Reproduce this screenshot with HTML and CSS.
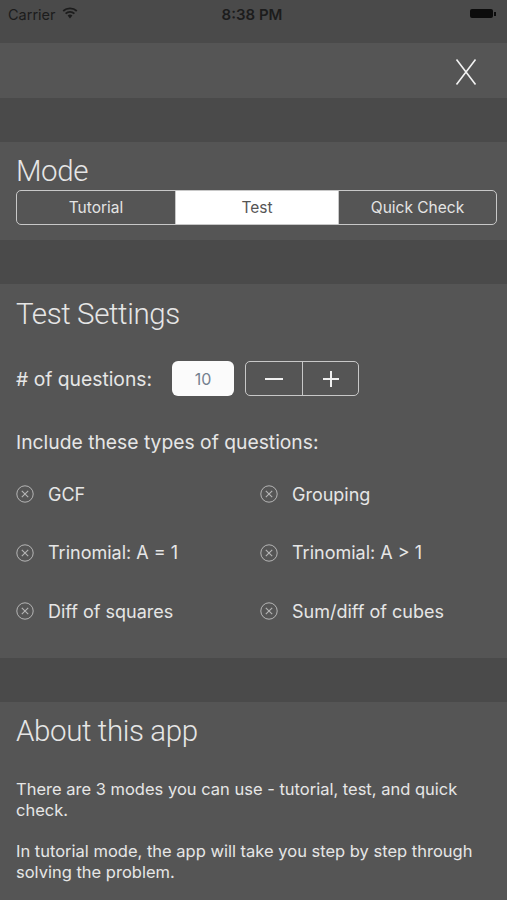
FILE: index.html
```html
<!DOCTYPE html>
<html>
<head>
<meta charset="utf-8">
<link rel="stylesheet" href="styles.css">
</head>
<body>
<div class="status">
  <div class="carrier">Carrier
    <svg class="wifi" width="16" height="12" viewBox="0 0 16 12">
      <path d="M8 11.5 L5.6 8.6 A3.6 3.6 0 0 1 10.4 8.6 Z" fill="#1c1c1c"/>
      <path d="M3.6 6.6 A6.4 6.4 0 0 1 12.4 6.6" stroke="#1c1c1c" stroke-width="1.8" fill="none"/>
      <path d="M1.2 4 A10 10 0 0 1 14.8 4" stroke="#1c1c1c" stroke-width="1.8" fill="none"/>
    </svg>
  </div>
  <div class="time">8:38 PM</div>
  <div class="battery"><span class="cell"></span><span class="nub"></span></div>
</div>
<div class="navbar">
  <svg class="close" width="22" height="28" viewBox="0 0 22 28">
    <path d="M1.5 1.5 L20.5 26.5 M20.5 1.5 L1.5 26.5" stroke="#f2f2f2" stroke-width="1.6" fill="none"/>
  </svg>
</div>
<div class="spacer"></div>
<section class="section mode">
  <h2 class="heading">Mode</h2>
  <div class="segmented">
    <div class="seg">Tutorial</div>
    <div class="seg active">Test</div>
    <div class="seg">Quick Check</div>
  </div>
</section>
<div class="spacer"></div>
<section class="section settings">
  <h2 class="heading">Test Settings</h2>
  <div class="qrow">
    <span class="label">#&nbsp;of questions:</span>
    <div class="numbox">10</div>
    <div class="stepper">
      <div class="step"><svg width="20" height="20" viewBox="0 0 20 20"><path d="M1 10 H19" stroke="#f0f0f0" stroke-width="2"/></svg></div>
      <div class="step"><svg width="20" height="20" viewBox="0 0 20 20"><path d="M2 10 H18 M10 2 V18" stroke="#f0f0f0" stroke-width="2"/></svg></div>
    </div>
  </div>
  <p class="include">Include these types of questions:</p>
  <div class="types">
    <div class="type"><svg class="chk" width="18" height="18" viewBox="0 0 18 18"><circle cx="9" cy="9" r="8.2" stroke="#b5b5b5" stroke-width="1" fill="none"/><path d="M5.8 5.8 L12.2 12.2 M12.2 5.8 L5.8 12.2" stroke="#b5b5b5" stroke-width="1.1"/></svg><span>GCF</span></div>
    <div class="type"><svg class="chk" width="18" height="18" viewBox="0 0 18 18"><circle cx="9" cy="9" r="8.2" stroke="#b5b5b5" stroke-width="1" fill="none"/><path d="M5.8 5.8 L12.2 12.2 M12.2 5.8 L5.8 12.2" stroke="#b5b5b5" stroke-width="1.1"/></svg><span>Grouping</span></div>
    <div class="type"><svg class="chk" width="18" height="18" viewBox="0 0 18 18"><circle cx="9" cy="9" r="8.2" stroke="#b5b5b5" stroke-width="1" fill="none"/><path d="M5.8 5.8 L12.2 12.2 M12.2 5.8 L5.8 12.2" stroke="#b5b5b5" stroke-width="1.1"/></svg><span>Trinomial: A = 1</span></div>
    <div class="type"><svg class="chk" width="18" height="18" viewBox="0 0 18 18"><circle cx="9" cy="9" r="8.2" stroke="#b5b5b5" stroke-width="1" fill="none"/><path d="M5.8 5.8 L12.2 12.2 M12.2 5.8 L5.8 12.2" stroke="#b5b5b5" stroke-width="1.1"/></svg><span>Trinomial: A &gt; 1</span></div>
    <div class="type"><svg class="chk" width="18" height="18" viewBox="0 0 18 18"><circle cx="9" cy="9" r="8.2" stroke="#b5b5b5" stroke-width="1" fill="none"/><path d="M5.8 5.8 L12.2 12.2 M12.2 5.8 L5.8 12.2" stroke="#b5b5b5" stroke-width="1.1"/></svg><span>Diff of squares</span></div>
    <div class="type"><svg class="chk" width="18" height="18" viewBox="0 0 18 18"><circle cx="9" cy="9" r="8.2" stroke="#b5b5b5" stroke-width="1" fill="none"/><path d="M5.8 5.8 L12.2 12.2 M12.2 5.8 L5.8 12.2" stroke="#b5b5b5" stroke-width="1.1"/></svg><span>Sum/diff of cubes</span></div>
  </div>
</section>
<div class="spacer"></div>
<section class="section about">
  <h2 class="heading">About this app</h2>
  <p class="para">There are 3 modes you can use - tutorial, test, and quick check.</p>
  <p class="para">In tutorial mode, the app will take you step by step through solving the problem.</p>
</section>
</body>
</html>
```

FILE: styles.css
```css
html, body {
  margin: 0;
  padding: 0;
}
body {
  background: #4a4a4a;
  font-family: Inter, Roboto, "Liberation Sans", sans-serif;
  color: #e2e2e2;
  height: 900px;
  overflow: hidden;
}
.status {
  height: 43px;
  display: grid;
  grid-template-columns: 1fr auto 1fr;
  align-items: start;
  padding: 6px 11px 0 8px;
  box-sizing: border-box;
  color: #1c1c1c;
  font-size: 14.5px;
}
.carrier {
  display: flex;
  align-items: center;
  gap: 6px;
  line-height: 17px;
}
.wifi { margin-top: -3px; }
.time {
  font-weight: 600;
  font-size: 15px;
  line-height: 17px;
}
.battery {
  justify-self: end;
  display: flex;
  align-items: center;
  margin-top: 3px;
}
.cell {
  width: 23px;
  height: 9px;
  background: #0c0c0c;
  border-radius: 2px;
}
.nub {
  width: 2px;
  height: 4px;
  background: #0c0c0c;
  margin-left: 1px;
}
.navbar {
  height: 55px;
  background: #555555;
  display: flex;
  justify-content: flex-end;
  align-items: center;
  padding-right: 30px;
}
.close { margin-top: 2px; }
.spacer {
  height: 44px;
}
.section {
  background: #555555;
  padding: 11px 10px 15px 16px;
}
.heading {
  margin: 0;
  font-family: Roboto, "Liberation Sans", sans-serif;
  font-size: 29.5px;
  line-height: 36px;
  font-weight: 300;
  color: #e6e6e6;
  letter-spacing: -0.4px;
}
.mode .segmented { margin-top: 1px; }
.segmented {
  display: grid;
  grid-template-columns: 158px 163px 1fr;
  height: 35px;
  border: 1.5px solid #c8c8c8;
  border-radius: 5px;
  overflow: hidden;
  box-sizing: border-box;
  width: 481px;
}
.seg {
  display: flex;
  align-items: center;
  justify-content: center;
  font-size: 15.5px;
  color: #e4e4e4;
  border-left: 1px solid #c8c8c8;
}
.seg:first-child { border-left: none; }
.seg.active {
  background: #ffffff;
  color: #555555;
}
.settings {
  padding: 12px 10px 35px 16px;
}
.qrow {
  margin-top: 29px;
  display: flex;
  align-items: center;
  height: 35px;
}
.label {
  font-size: 19.3px;
  color: #e6e6e6;
  width: 156px;
}
.numbox {
  width: 62px;
  height: 35px;
  background: #fbfbfb;
  border-radius: 6px;
  display: flex;
  align-items: center;
  justify-content: center;
  color: #74808f;
  font-size: 16px;
}
.stepper {
  margin-left: 11px;
  width: 114px;
  height: 35px;
  box-sizing: border-box;
  border: 1.5px solid #c8c8c8;
  border-radius: 5px;
  display: grid;
  grid-template-columns: 1fr 1fr;
}
.step {
  display: flex;
  align-items: center;
  justify-content: center;
}
.step + .step { border-left: 1.5px solid #c8c8c8; }
.include {
  margin: 34px 0 0;
  font-size: 19.3px;
  line-height: 24px;
  color: #e6e6e6;
}
.types {
  margin-top: 28px;
  display: grid;
  grid-template-columns: 244px 1fr;
  row-gap: 34.5px;
}
.type {
  display: flex;
  align-items: center;
  height: 24px;
  font-size: 18px;
  color: #e6e6e6;
}
.chk {
  margin-right: 14px;
  flex: none;
}
.about {
  padding: 11px 16px 30px 16px;
}
.para {
  margin: 30px 0 0;
  font-size: 16.5px;
  line-height: 21px;
  color: #e6e6e6;
}
.para + .para { margin-top: 20px; }
```
